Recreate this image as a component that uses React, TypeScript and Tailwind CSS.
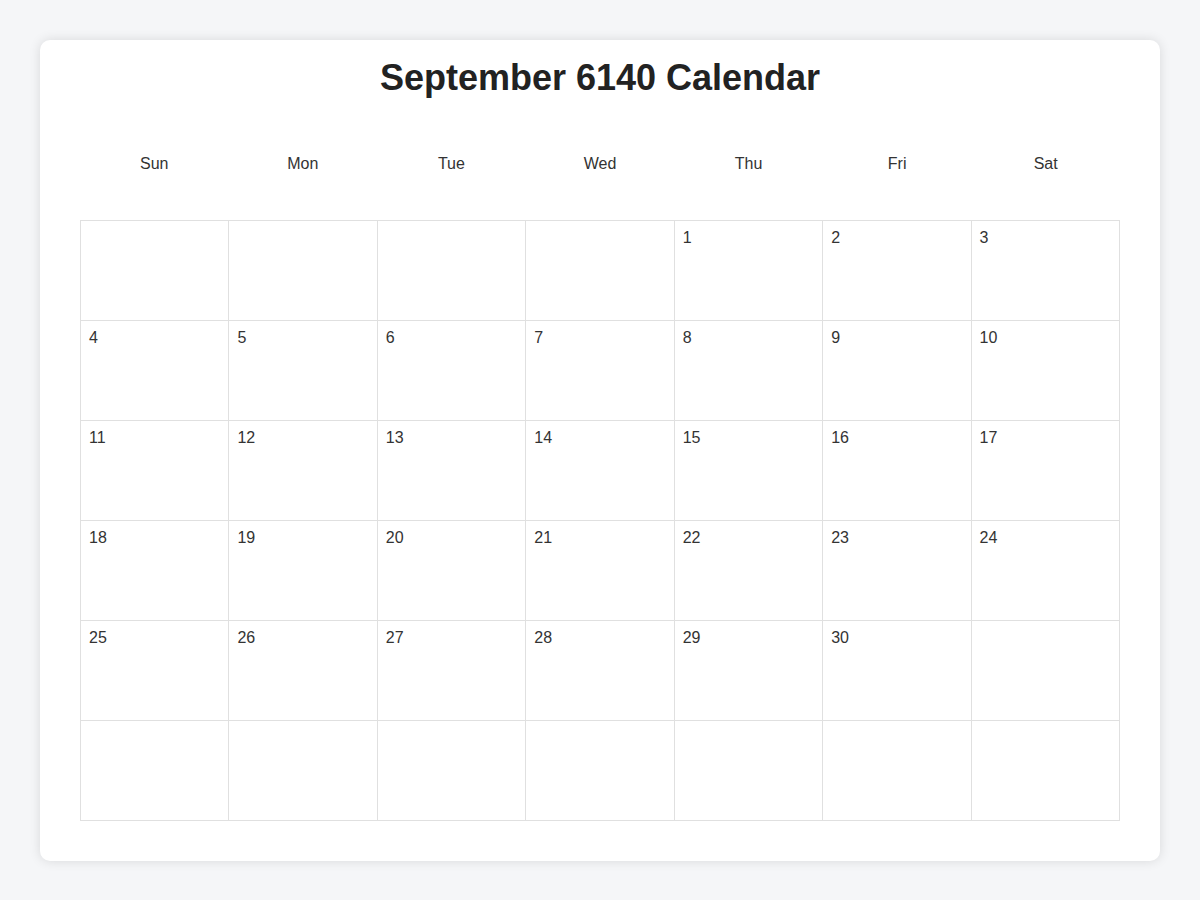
const weekdays = ['Sun', 'Mon', 'Tue', 'Wed', 'Thu', 'Fri', 'Sat']

// September 6140 starts on a Thursday; 6 rows of 7
const cells: (number | null)[] = Array.from({ length: 42 }, (_, i) => {
  const day = i - 3
  return day >= 1 && day <= 30 ? day : null
})

export default function App() {
  return (
    <div
      className="min-h-[900px] w-full bg-[#f5f6f8] p-10"
      style={{ fontFamily: '"Liberation Sans", Arial, sans-serif' }}
    >
      <div className="rounded-[10px] bg-white px-10 pt-[17px] pb-10 shadow-[0_0_12px_rgba(0,0,0,0.12)]">
        <h1 className="text-center text-[36px] font-bold leading-[1.15] text-[#222]">
          September 6140 Calendar
        </h1>

        <div className="mt-[46px] grid grid-cols-7">
          {weekdays.map((d) => (
            <div key={d} className="flex h-10 items-center justify-center text-base text-[#333]">
              {d}
            </div>
          ))}
        </div>

        <div className="mt-9 grid grid-cols-7 border-l border-t border-[#e0e0e0]">
          {cells.map((n, i) => (
            <div
              key={i}
              className="h-[100px] border-b border-r border-[#e0e0e0] px-2 pt-[8px] text-base leading-[1.15] text-[#333]"
            >
              {n ?? ''}
            </div>
          ))}
        </div>
      </div>
    </div>
  )
}
